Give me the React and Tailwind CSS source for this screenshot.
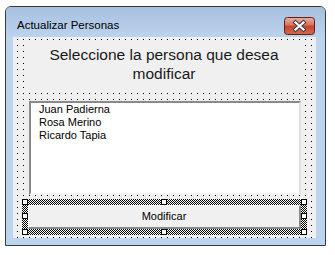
import React from "react";

const items = ["Juan Padierna", "Rosa Merino", "Ricardo Tapia"];

// small white squares on the selected button
const handles = [
  "left-0 top-0",
  "left-[139px] top-0",
  "left-[279px] top-0",
  "left-0 top-[14px]",
  "left-[279px] top-[14px]",
  "left-0 top-[30px]",
  "left-[139px] top-[30px]",
  "left-[279px] top-[30px]",
];

function CloseButton() {
  return (
    <svg width="31" height="18" viewBox="0 0 31 18">
      <defs>
        <linearGradient id="closeGrad" x1="0" y1="0" x2="0" y2="1">
          <stop offset="0" stopColor="#eab0a3" />
          <stop offset="0.45" stopColor="#d7725c" />
          <stop offset="0.5" stopColor="#c4442b" />
          <stop offset="1" stopColor="#d66a52" />
        </linearGradient>
      </defs>
      <rect x="0.5" y="0.5" width="30" height="17" rx="3" fill="url(#closeGrad)" stroke="#5e2016" />
      <path d="M11.5 5.5 L19.5 12.5 M19.5 5.5 L11.5 12.5" stroke="#3f3f48" strokeWidth="4.2" strokeLinecap="square" />
      <path d="M11.5 5.5 L19.5 12.5 M19.5 5.5 L11.5 12.5" stroke="#ffffff" strokeWidth="2.2" strokeLinecap="square" />
    </svg>
  );
}

export default function App() {
  return (
    <div className="w-[335px] h-[255px] bg-white pt-[6px] pl-[5px] font-['Liberation_Sans',Arial,sans-serif] text-black">
      {/* WINDOW */}
      <div className="w-[321px] h-[240px] border border-[#3a3a3a] rounded-t-[6px] bg-[#bcd4ee] flex flex-col overflow-hidden">
        {/* TITLE BAR */}
        <div className="h-[30px] shrink-0 pt-[7px] pl-[11px] pr-[10px] flex items-center justify-between bg-[linear-gradient(to_bottom,#a6c0df,#bcd3ed)]">
          <span className="text-[11.5px] leading-none">Actualizar Personas</span>
          <CloseButton />
        </div>

        {/* CLIENT AREA */}
        <div className="ml-[7px] w-[303px] h-[201px] shrink-0 bg-[#f0f0f0] bg-[conic-gradient(at_1px_1px,transparent_75%,#000_0)] bg-size-[6px_6px] bg-position-[4px_2px] pt-[5px]">
          {/* LABEL */}
          <div className="ml-[15px] w-[272px] h-[46px] bg-[#f0f0f0] pt-[3px] text-center text-[15.5px] leading-[19px] text-[#1a1a1a]">
            Seleccione la persona que desea
            <br />
            modificar
          </div>

          {/* LISTBOX */}
          <div className="mt-[13px] ml-[16px] w-[272px] h-[94px] bg-white border-t-2 border-l-2 border-t-[#8a8a8a] border-l-[#8a8a8a] border-b-2 border-r-2 border-b-[#f4f4f4] border-r-[#e0e0e0] pl-[8px] text-[11px] leading-[13px]">
            {items.map((name) => (
              <div key={name}>{name}</div>
            ))}
          </div>

          {/* SELECTED BUTTON */}
          <div className="relative mt-[4px] ml-[9px] w-[285px] h-[36px] p-[6px] bg-[conic-gradient(#000_25%,#fff_0_50%,#000_0_75%,#fff_0)] bg-size-[2px_2px]">
            <div className="w-full h-full bg-[#f0f0f0] border-t border-l border-t-white border-l-white border-b-2 border-r-2 border-b-[#8a8a8a] border-r-[#8a8a8a] flex items-center justify-center text-[11px]">
              Modificar
            </div>
            {handles.map((pos) => (
              <div key={pos} className={`absolute w-[6px] h-[6px] bg-white border border-black ${pos}`} />
            ))}
          </div>
        </div>
      </div>
    </div>
  );
}
